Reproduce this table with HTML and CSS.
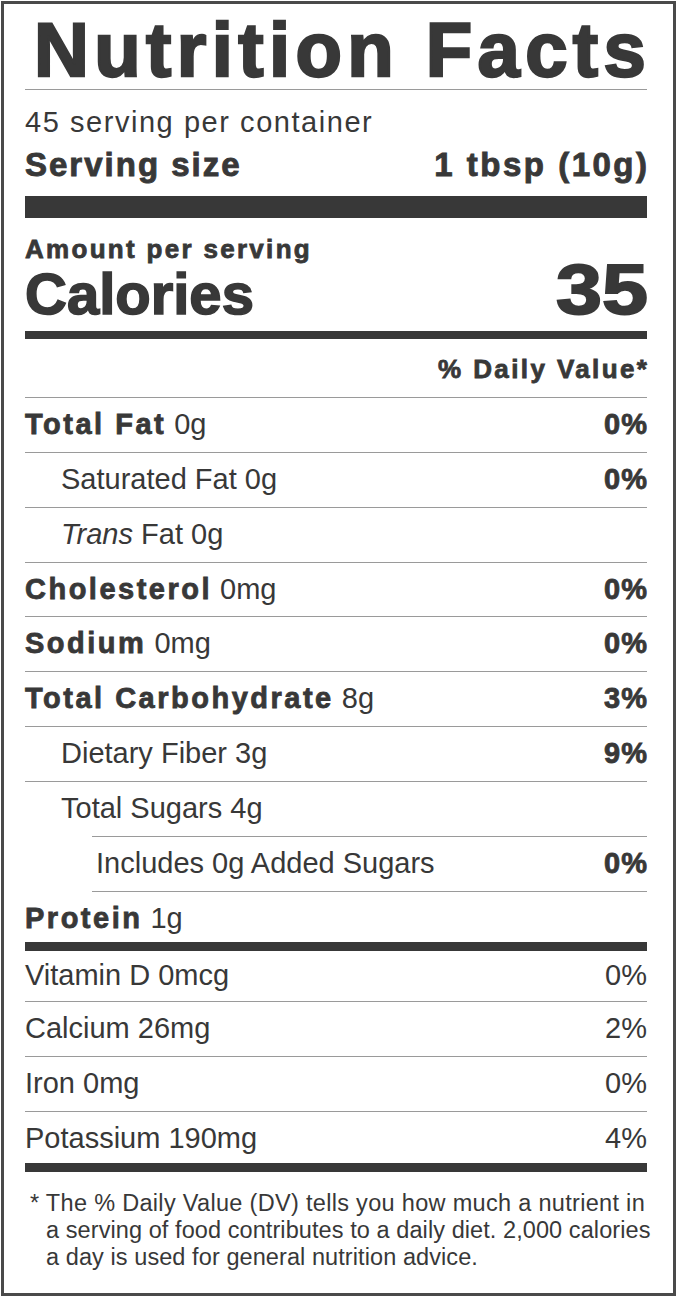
FILE: index.html
```html
<!DOCTYPE html>
<html lang="en">
<head>
<meta charset="utf-8">
<title>Nutrition Facts</title>
<link rel="stylesheet" href="styles.css">
</head>
<body>
<div class="label">
  <h1 class="title">Nutrition Facts</h1>
  <p class="servings">45 serving per container</p>
  <div class="serving-size"><span class="ss-label">Serving size</span><span class="ss-value">1 tbsp (10g)</span></div>
  <div class="bar bar-thick"></div>
  <p class="amount">Amount per serving</p>
  <div class="calories"><span class="cal-label">Calories</span><span class="cal-value">35</span></div>
  <div class="bar bar-medium"></div>
  <p class="dv-head"><span>% Daily Value*</span></p>

  <div class="row"><span><b>Total Fat</b> 0g</span><b class="pct">0%</b></div>
  <div class="row indent"><span>Saturated Fat 0g</span><b class="pct">0%</b></div>
  <div class="row indent"><span><i>Trans</i> Fat 0g</span></div>
  <div class="row chol"><span><b>Cholesterol</b> 0mg</span><b class="pct">0%</b></div>
  <div class="row"><span><b>Sodium</b> 0mg</span><b class="pct">0%</b></div>
  <div class="row"><span><b>Total Carbohydrate</b> 8g</span><b class="pct">3%</b></div>
  <div class="row indent"><span>Dietary Fiber 3g</span><b class="pct">9%</b></div>
  <div class="row indent sugars"><span>Total Sugars 4g</span></div>
  <div class="row includes"><span>Includes 0g Added Sugars</span><b class="pct">0%</b></div>
  <div class="row protein"><span><b>Protein</b> 1g</span></div>
  <div class="bar bar-small"></div>

  <div class="row vit-first"><span>Vitamin D 0mcg</span><span class="pct-reg">0%</span></div>
  <div class="row"><span>Calcium 26mg</span><span class="pct-reg">2%</span></div>
  <div class="row"><span>Iron 0mg</span><span class="pct-reg">0%</span></div>
  <div class="row last"><span>Potassium 190mg</span><span class="pct-reg">4%</span></div>
  <div class="bar bar-small"></div>

  <p class="footnote"><span class="fn-first">* The % Daily Value (DV) tells you how much a nutrient in</span><br>a serving of food contributes to a daily diet. 2,000 calories<br>a day is used for general nutrition advice.</p>
</div>
</body>
</html>
```
FILE: styles.css
```css
* {
  box-sizing: border-box;
}

body {
  margin: 0;
  background: #fff;
  font-family: "Liberation Sans", Arial, sans-serif;
  color: #383838;
}

.label {
  margin: 1px 0 0 1px;
  width: 675px;
  height: 1295px;
  border: 3px solid #4a4a4a;
  padding: 0 26px 0 21px;
  background: #fff;
}

.title {
  margin: 0;
  padding: 8px 0 1px 9px;
  font-size: 76px;
  line-height: 76px;
  font-weight: 700;
  letter-spacing: 5.4px;
  -webkit-text-stroke: 2.4px #383838;
  border-bottom: 1px solid #9a9a9a;
  white-space: nowrap;
}

.servings {
  margin: 15px 0 0;
  font-size: 29px;
  line-height: 34px;
  letter-spacing: 1.55px;
}

.serving-size {
  display: flex;
  justify-content: space-between;
  margin-top: 6px;
  font-size: 33px;
  line-height: 40px;
  font-weight: 700;
  -webkit-text-stroke: 0.9px #383838;
  white-space: nowrap;
}

.ss-label {
  letter-spacing: 2px;
}

.ss-value {
  letter-spacing: 2.5px;
  margin-right: -2.5px;
}

.bar {
  background: #383838;
}

.bar-thick {
  height: 22px;
  margin-top: 11px;
}

.bar-medium {
  height: 8px;
  margin-top: 12px;
}

.bar-small {
  height: 9px;
}

.amount {
  margin: 16px 0 0;
  font-size: 26px;
  line-height: 30px;
  font-weight: 700;
  letter-spacing: 2.3px;
  -webkit-text-stroke: 0.8px #383838;
}

.calories {
  display: flex;
  justify-content: space-between;
  align-items: baseline;
  height: 54px;
  margin-top: 1px;
  font-weight: 700;
}

.cal-label {
  font-size: 58px;
  line-height: 50px;
  -webkit-text-stroke: 1.6px #383838;
}

.cal-value {
  font-size: 70px;
  line-height: 50px;
  transform: scaleX(1.18);
  transform-origin: right center;
  -webkit-text-stroke: 2px #383838;
  margin-right: -1px;
}

.dv-head {
  margin: 15px 0 0;
  padding-bottom: 13px;
  border-bottom: 1px solid #9a9a9a;
  text-align: right;
  font-size: 26px;
  line-height: 30px;
  font-weight: 700;
  -webkit-text-stroke: 0.8px #383838;
}

.dv-head span {
  letter-spacing: 2.4px;
  margin-right: -2.4px;
}

.row {
  display: flex;
  justify-content: space-between;
  padding: 2px 0 4px;
  font-size: 29px;
  line-height: 48px;
  border-bottom: 1px solid #9a9a9a;
  white-space: nowrap;
}

.row b {
  font-weight: 700;
  letter-spacing: 2.5px;
  -webkit-text-stroke: 0.8px #383838;
}

.row b.pct {
  letter-spacing: 1px;
  margin-right: -1px;
}

.row i {
  font-style: italic;
}

.indent {
  padding-left: 36px;
}

.chol {
  padding-bottom: 3px;
}

.sugars {
  border-bottom: none;
}

.includes {
  margin-left: 67px;
  padding-left: 4px;
  border-top: 1px solid #9a9a9a;
}

.protein {
  border-bottom: none;
  padding-bottom: 0;
}

.vit-first {
  padding-top: 1px;
  padding-bottom: 3px;
  line-height: 46px;
}

.last {
  border-bottom: none;
  padding-bottom: 1px;
}

.footnote {
  margin: 18px 0 0;
  padding-left: 21px;
  text-indent: -16px;
  font-size: 23.5px;
  line-height: 27px;
  letter-spacing: 0.08px;
  white-space: nowrap;
}

.fn-first {
  letter-spacing: 0.31px;
}
```
